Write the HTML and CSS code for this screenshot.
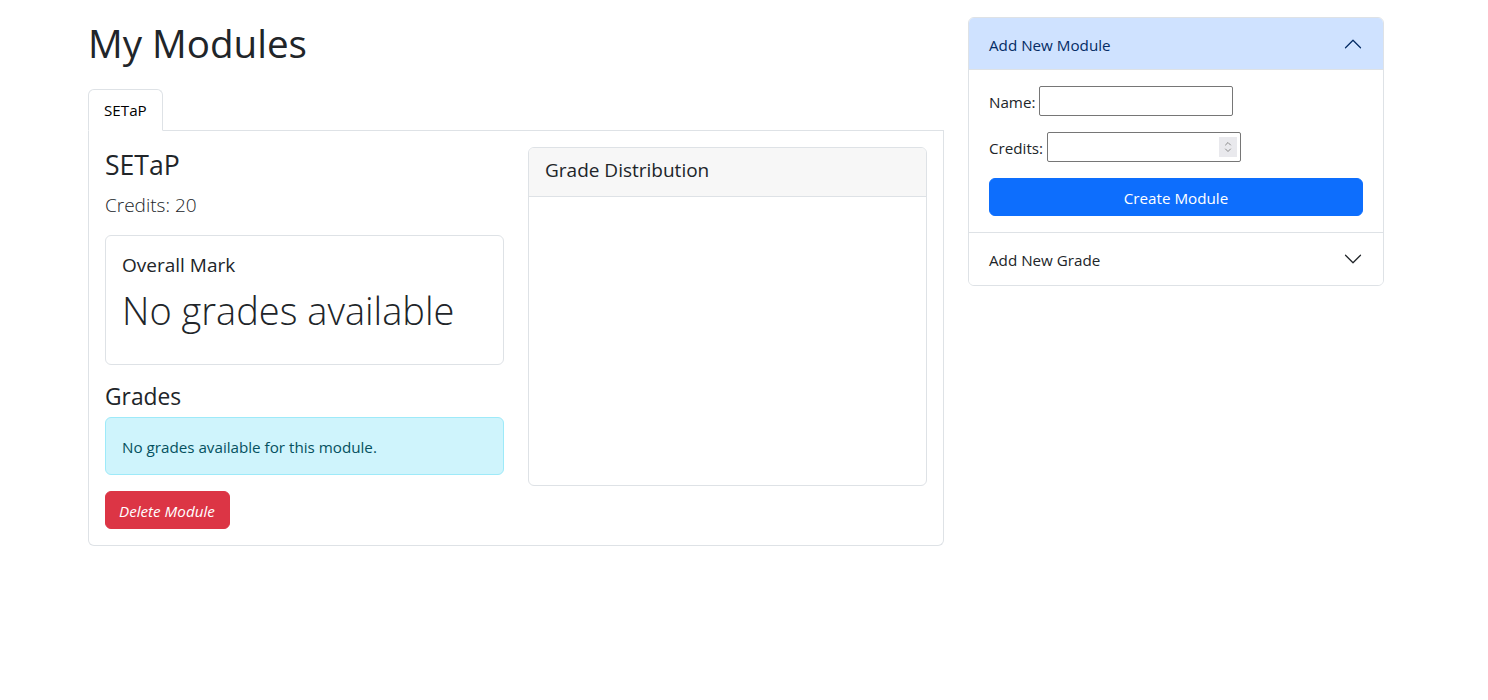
FILE: index.html
```html
<!DOCTYPE html>
<html lang="en">
<head>
<meta charset="utf-8">
<title>My Modules</title>
<link rel="stylesheet" href="styles.css">
</head>
<body>
<div class="page">
  <main class="main-col">
    <h1 class="page-title">My Modules</h1>
    <ul class="tabs">
      <li class="tab active">SETaP</li>
    </ul>
    <section class="tab-pane">
      <div class="pane-grid">
        <div class="module-info">
          <h3 class="module-name">SETaP</h3>
          <p class="lead">Credits: 20</p>
          <div class="card mark-card">
            <h5 class="card-title">Overall Mark</h5>
            <p class="mark-value">No grades available</p>
          </div>
          <h4 class="section-title">Grades</h4>
          <div class="alert-info">No grades available for this module.</div>
          <button class="btn btn-danger" type="button">Delete Module</button>
        </div>
        <div class="card chart-card">
          <div class="card-header"><h5 class="card-header-title">Grade Distribution</h5></div>
          <div class="chart-body"></div>
        </div>
      </div>
    </section>
  </main>
  <aside class="side-col">
    <div class="accordion">
      <div class="acc-item">
        <button class="acc-btn open" type="button">
          <span>Add New Module</span>
          <svg class="chev" width="20" height="20" viewBox="0 0 16 16" fill="none" stroke="#052c65" stroke-linecap="round" stroke-linejoin="round"><path d="M2 11L8 5L14 11"/></svg>
        </button>
        <div class="acc-body">
          <div class="field">
            <label class="field-label">Name:</label>
            <input class="field-input" type="text">
          </div>
          <div class="field">
            <label class="field-label">Credits:</label>
            <span class="num-wrap">
              <input class="field-input" type="number">
              <span class="spin">
                <svg width="8" height="16" viewBox="0 0 8 16" fill="none" stroke="#8a8a8a" stroke-linecap="round" stroke-linejoin="round"><path d="M1.5 6L4 3.5L6.5 6"/><path d="M1.5 10L4 12.5L6.5 10"/></svg>
              </span>
            </span>
          </div>
          <button class="btn btn-primary" type="button">Create Module</button>
        </div>
      </div>
      <div class="acc-item">
        <button class="acc-btn" type="button">
          <span>Add New Grade</span>
          <svg class="chev" width="20" height="20" viewBox="0 0 16 16" fill="none" stroke="#212529" stroke-linecap="round" stroke-linejoin="round"><path d="M2 5L8 11L14 5"/></svg>
        </button>
      </div>
    </div>
  </aside>
</div>
</body>
</html>
```
FILE: styles.css
```css
* { box-sizing: border-box; }
html, body { margin: 0; padding: 0; background: #fff; }
body {
  font-family: "Open Sans", "Noto Sans", sans-serif;
  font-size: 15.2px;
  line-height: 24px;
  color: #212529;
}
.page {
  display: flex;
  gap: 24px;
  padding-left: 88px;
  align-items: flex-start;
}
.main-col { width: 856px; padding-top: 19px; }
.side-col { width: 416px; padding-top: 17px; }

.page-title {
  margin: 0 0 22px;
  font-size: 38.6px;
  line-height: 48px;
  font-weight: 400;
}
.tabs {
  list-style: none;
  margin: 0;
  padding: 0;
  display: flex;
  border-bottom: 1px solid #dee2e6;
}
.tab {
  padding: 8px 15px;
  line-height: 24px;
  border: 1px solid transparent;
  border-radius: 6px 6px 0 0;
  margin-bottom: -1px;
}
.tab.active {
  border-color: #dee2e6 #dee2e6 #fff;
  background: #fff;
  color: #000;
}
.tab-pane {
  border: 1px solid #dee2e6;
  border-top: 0;
  border-radius: 0 0 6px 6px;
  padding: 16px;
}
.pane-grid {
  display: grid;
  grid-template-columns: 399px 399px;
  gap: 24px;
  align-items: start;
}
.module-name {
  margin: 0 0 6px;
  padding-top: 2px;
  font-size: 26.6px;
  line-height: 33.6px;
  font-weight: 400;
}
.lead {
  margin: 0 0 15px;
  padding-top: 1px;
  font-size: 19px;
  line-height: 30px;
  font-weight: 300;
}
.card {
  border: 1px solid #dee2e6;
  border-radius: 6px;
  background: #fff;
}
.mark-card { padding: 16px; margin-bottom: 16px; }
.card-title {
  margin: 0 0 7px;
  padding-top: 1px;
  font-size: 19px;
  line-height: 24px;
  font-weight: 400;
}
.mark-value {
  margin: 0 0 14px;
  padding-top: 2px;
  font-size: 38px;
  line-height: 48px;
  font-weight: 300;
}
.section-title {
  margin: 0 0 6px;
  padding-top: 2px;
  font-size: 22.8px;
  line-height: 28.8px;
  font-weight: 400;
}
.alert-info {
  background: #cff4fc;
  border: 1px solid #9eeaf9;
  color: #055160;
  border-radius: 6px;
  padding: 17px 16px 15px;
  line-height: 24px;
  margin-bottom: 16px;
}
.btn {
  font-family: inherit;
  font-size: 15.2px;
  line-height: 24px;
  padding: 7px 12px 5px;
  border: 1px solid transparent;
  border-radius: 6px;
  color: #fff;
  cursor: pointer;
  display: block;
}
.btn-danger {
  background: #dc3545;
  border-color: #dc3545;
  font-style: italic;
  padding-left: 13px;
  padding-right: 14px;
}
.btn-primary {
  background: #0d6efd;
  border-color: #0d6efd;
  width: 100%;
}
.chart-card { overflow: hidden; }
.card-header {
  background: #f7f7f7;
  border-bottom: 1px solid #dee2e6;
  padding: 10px 16px 6px;
}
.card-header-title {
  margin: 0 0 8px;
  font-size: 19px;
  line-height: 24px;
  font-weight: 400;
}
.chart-body { height: 288px; }

.accordion {
  border: 1px solid #dee2e6;
  border-radius: 6px;
  overflow: hidden;
}
.acc-item + .acc-item { border-top: 1px solid #dee2e6; }
.acc-btn {
  display: flex;
  align-items: center;
  justify-content: space-between;
  width: 100%;
  height: 52px;
  padding: 2px 20px 0;
  font-family: inherit;
  font-size: 15.2px;
  line-height: 20px;
  border: 0;
  background: #fff;
  color: #212529;
  text-align: left;
}
.acc-btn.open {
  background: #cfe2ff;
  color: #052c65;
  box-shadow: inset 0 -1px 0 #dee2e6;
}
.chev { flex: none; margin-top: -2px; }
.acc-body { padding: 16px 20px; }
.field {
  display: flex;
  align-items: center;
  gap: 4px;
  margin-bottom: 16px;
  height: 30px;
}
.field-label { line-height: 24px; padding-top: 1px; }
.field-input {
  width: 194px;
  height: 30px;
  border: 1px solid #767676;
  border-radius: 2px;
  padding: 1px 2px;
  font-family: inherit;
  font-size: 14px;
  background: #fff;
  display: block;
}
.num-wrap { position: relative; display: block; height: 30px; }
.field-input[type=number] { -moz-appearance: textfield; }
.field-input::-webkit-inner-spin-button,
.field-input::-webkit-outer-spin-button { -webkit-appearance: none; margin: 0; }
.spin {
  position: absolute;
  right: 4px;
  top: 5px;
  width: 18px;
  height: 20px;
  background: #e9e9ed;
  display: flex;
  align-items: center;
  justify-content: center;
}
```
